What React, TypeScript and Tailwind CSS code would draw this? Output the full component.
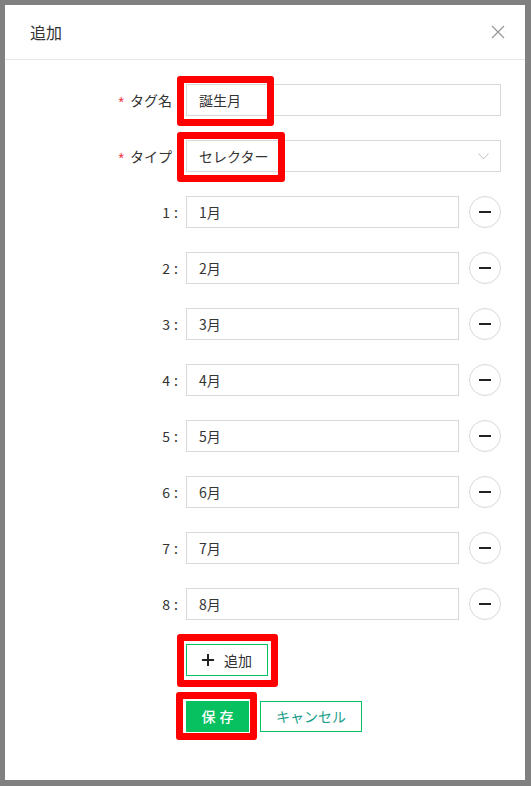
import type { ReactNode } from 'react';

const font = { fontFamily: '"Noto Sans CJK JP", "Noto Sans", sans-serif' };

const months = ['1月', '2月', '3月', '4月', '5月', '6月', '7月', '8月'];

// Red highlight frame drawn over a control (screenshot annotation)
function Mark({ className }: { className: string }) {
  return (
    <span
      className={`pointer-events-none absolute rounded-[3px] border-[7px] border-[#ff0000] ${className}`}
      aria-hidden="true"
    />
  );
}

function Row({ label, children }: { label: ReactNode; children: ReactNode }) {
  return (
    <div className="mb-[24px] flex h-[32px] items-center">
      <div className="flex w-[181px] shrink-0 justify-end text-[14px] text-[#333]">{label}</div>
      {children}
    </div>
  );
}

function Required({ text }: { text: string }) {
  return (
    <span className="flex items-center pr-[14px]">
      <span className="mr-[6px] mt-[4px] font-['Liberation_Sans',sans-serif] text-[14px] leading-none text-[#f5222d]">
        *
      </span>
      {text}
    </span>
  );
}

export default function App() {
  return (
    <div className="h-[786px] w-[531px] bg-[#808080] pl-[5px] pt-[5px]" style={font}>
      <div className="w-[520px] bg-white">
        {/* Cabecera */}
        <div className="flex h-[55px] items-center justify-between border-b border-[#e8e8e8] pl-[25px] pr-[20px]">
          <h2 className="text-[16px] text-[#333]">追加</h2>
          <svg width="14" height="14" viewBox="0 0 14 14" className="text-[#999]">
            <path d="M1 1 13 13M13 1 1 13" stroke="currentColor" strokeWidth="1.3" fill="none" />
          </svg>
        </div>

        {/* Formulario */}
        <div className="pb-[24px] pt-[24px]">
          <Row label={<Required text="タグ名" />}>
            <div className="relative flex h-[32px] w-[315px] items-center border border-[#d9d9d9] px-[12px] text-[14px] text-[#333]">
              誕生月
              <Mark className="-left-[10px] -top-[9px] h-[50px] w-[97px]" />
            </div>
          </Row>

          <Row label={<Required text="タイプ" />}>
            <div className="relative flex h-[32px] w-[315px] items-center justify-between border border-[#d9d9d9] pl-[12px] pr-[11px] text-[14px] text-[#333]">
              セレクター
              <svg width="11" height="7" viewBox="0 0 11 7" className="text-[#bfbfbf]">
                <path d="M.5.5 5.5 6 10.5.5" stroke="currentColor" strokeWidth="1" fill="none" />
              </svg>
              <Mark className="-left-[10px] -top-[9px] h-[50px] w-[108px]" />
            </div>
          </Row>

          {months.map((m, i) => (
            <Row
              key={m}
              label={
                <span className="pr-[8px]">
                  {i + 1}
                  <span className="ml-[4px]">:</span>
                </span>
              }
            >
              <div className="flex h-[32px] w-[273px] items-center border border-[#d9d9d9] px-[12px] text-[14px] text-[#333]">
                {m}
              </div>
              <div className="ml-[10px] flex h-[32px] w-[32px] items-center justify-center rounded-full border border-[#d9d9d9]">
                <span className="h-[2px] w-[12px] bg-[#222]" />
              </div>
            </Row>
          ))}

          <Row label={null}>
            <div className="relative flex h-[32px] w-[82px] items-center justify-center gap-[10px] border border-[#07c160] text-[14px] text-[#333]">
              <svg width="12" height="12" viewBox="0 0 12 12" className="text-[#222]">
                <path d="M6 0v12M0 6h12" stroke="currentColor" strokeWidth="2" fill="none" />
              </svg>
              追加
              <Mark className="-left-[10px] -top-[11px] h-[53px] w-[101px]" />
            </div>
          </Row>

          <div className="mb-[24px] flex h-[32px] items-center pl-[181px]">
            <div className="relative flex h-[31px] w-[63px] items-center justify-center bg-[#07c160] text-[14px] font-medium tracking-[4px] text-white">
              <span className="pl-[4px]">保存</span>
              <Mark className="-left-[10px] -top-[9px] h-[48px] w-[81px]" />
            </div>
            <div className="ml-[11px] flex h-[31px] w-[102px] items-center justify-center border border-[#07c160] text-[14px] text-[#1a9e8a]">
              キャンセル
            </div>
          </div>
        </div>
      </div>
    </div>
  );
}
